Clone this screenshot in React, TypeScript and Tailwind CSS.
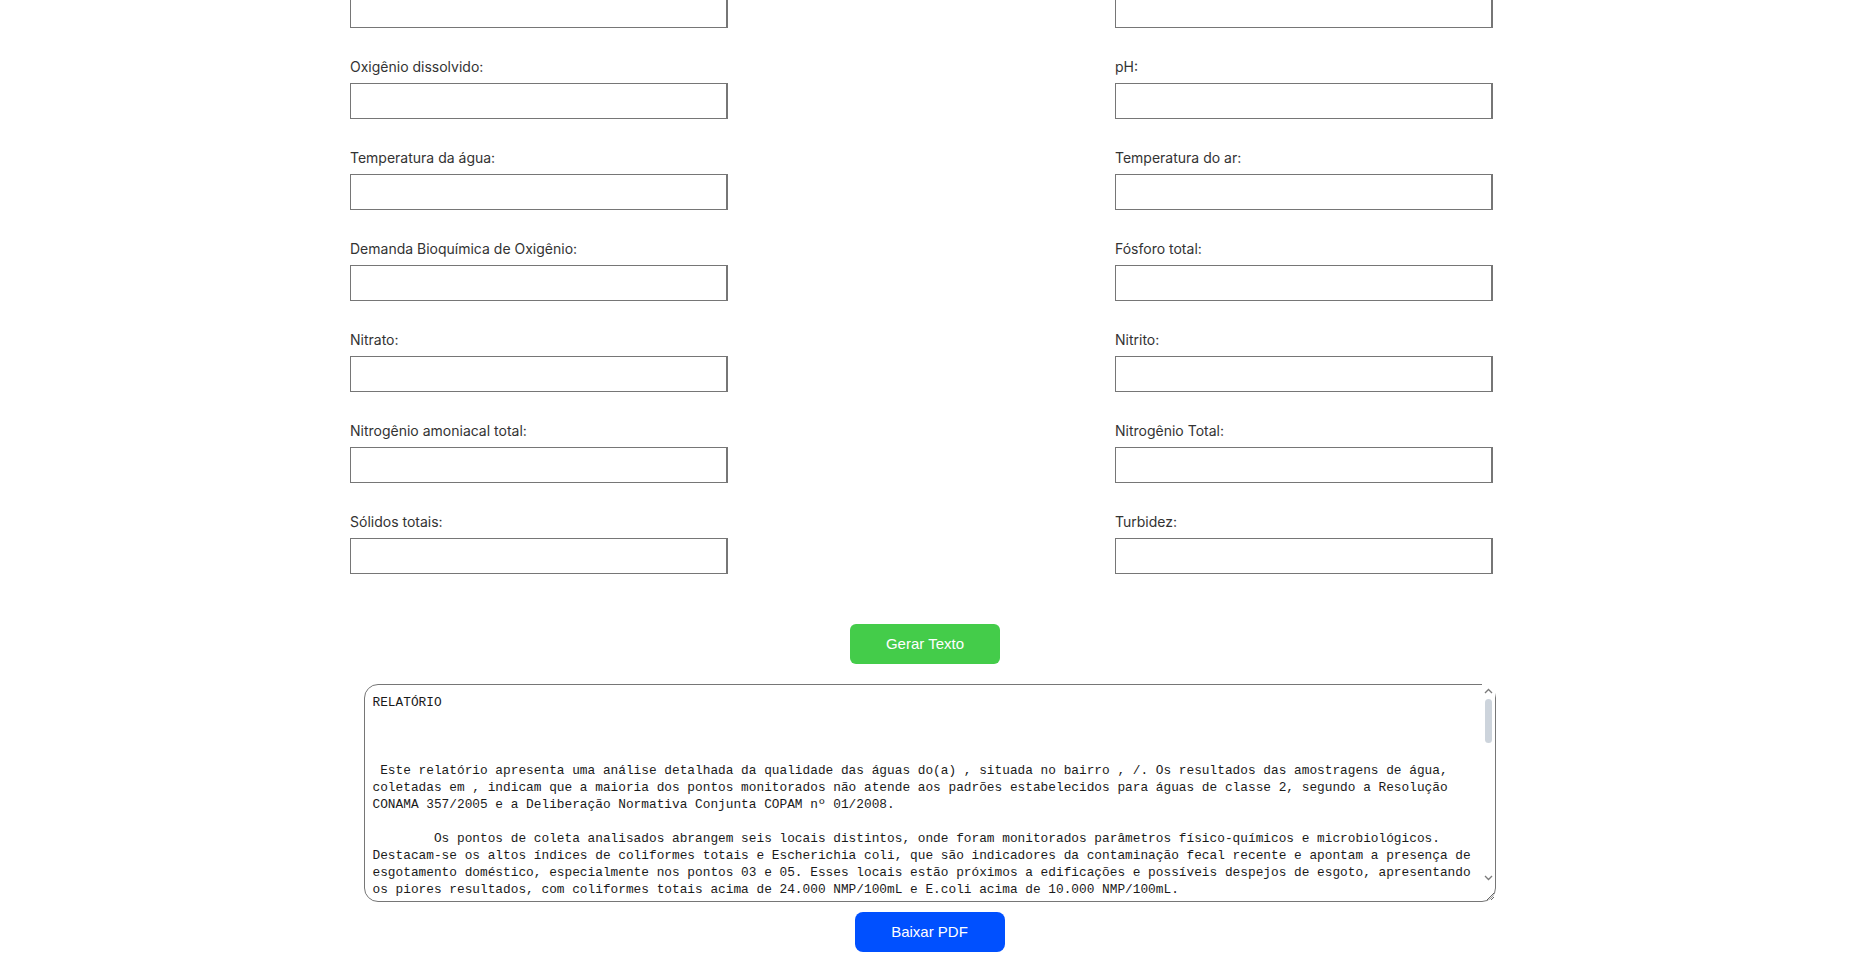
import React from "react";

const fields: [string, string][] = [
  ["Oxigênio dissolvido:", "pH:"],
  ["Temperatura da água:", "Temperatura do ar:"],
  ["Demanda Bioquímica de Oxigênio:", "Fósforo total:"],
  ["Nitrato:", "Nitrito:"],
  ["Nitrogênio amoniacal total:", "Nitrogênio Total:"],
  ["Sólidos totais:", "Turbidez:"],
];

const ind = "        ";

const relatorio = `RELATÓRIO



 Este relatório apresenta uma análise detalhada da qualidade das águas do(a) , situada no bairro , /. Os resultados das amostragens de água,
coletadas em , indicam que a maioria dos pontos monitorados não atende aos padrões estabelecidos para águas de classe 2, segundo a Resolução
CONAMA 357/2005 e a Deliberação Normativa Conjunta COPAM nº 01/2008.

${ind}Os pontos de coleta analisados abrangem seis locais distintos, onde foram monitorados parâmetros físico-químicos e microbiológicos.
Destacam-se os altos índices de coliformes totais e Escherichia coli, que são indicadores da contaminação fecal recente e apontam a presença de
esgotamento doméstico, especialmente nos pontos 03 e 05. Esses locais estão próximos a edificações e possíveis despejos de esgoto, apresentando
os piores resultados, com coliformes totais acima de 24.000 NMP/100mL e E.coli acima de 10.000 NMP/100mL.

${ind}Em relação aos parâmetros físico-químicos, foram observadas concentrações de oxigênio dissolvido abaixo do limite mínimo de 5 mg/L
em parte dos pontos, o que indica consumo elevado de oxigênio pela decomposição de matéria orgânica.

${ind}Os valores de pH permaneceram dentro da faixa de 6,0 a 9,0 estabelecida pela legislação. A temperatura da água e do ar apresentou
variação compatível com o período de amostragem.

${ind}A Demanda Bioquímica de Oxigênio (DBO) e o fósforo total apresentaram valores acima dos limites em alguns pontos, reforçando a
hipótese de lançamento de efluentes domésticos sem tratamento adequado.

${ind}As concentrações de nitrato, nitrito e nitrogênio amoniacal total mantiveram-se, em geral, abaixo dos limites estabelecidos.

${ind}Os sólidos totais e a turbidez apresentaram variações associadas ao escoamento superficial e ao carreamento de sedimentos.



CONCLUSÃO


${ind}Diante dos resultados obtidos, recomenda-se a identificação e a eliminação das fontes de lançamento de esgoto, bem como a
continuidade do monitoramento da qualidade das águas, a fim de acompanhar a evolução dos parâmetros analisados.
`;

function Field({ label }: { label: string }) {
  return (
    <div className="flex flex-col w-[378px]">
      <label className="pt-[1px] text-sm leading-5 text-[#333333] mb-[6px]">{label}</label>
      <input
        type="text"
        className="h-9 w-[378px] border border-r-2 border-[#767676] bg-white px-2 text-sm outline-none"
      />
    </div>
  );
}

function Chevron({ up }: { up?: boolean }) {
  return (
    <svg width="9" height="6" viewBox="0 0 9 6" className="block">
      <path
        d={up ? "M1 5 L4.5 1.5 L8 5" : "M1 1 L4.5 4.5 L8 1"}
        fill="none"
        stroke="#7a7a7a"
        strokeWidth="1.3"
      />
    </svg>
  );
}

export default function App() {
  return (
    <div className="bg-white min-h-screen flex flex-col items-center font-['Inter','Noto_Sans',sans-serif]">
      <div className="w-[1143px] mr-[16px] flex flex-col gap-y-[28px]">
        <div className="flex justify-between -mt-[8px]">
          <input className="h-9 w-[378px] border border-r-2 border-[#767676] bg-white" />
          <input className="h-9 w-[378px] border border-r-2 border-[#767676] bg-white" />
        </div>
        {fields.map(([a, b]) => (
          <div key={a} className="flex justify-between">
            <Field label={a} />
            <Field label={b} />
          </div>
        ))}
      </div>

      <button className="mt-[50px] mr-[9px] h-10 w-[150px] rounded-md bg-[#44cc4a] text-white text-[15px] font-['Liberation_Sans',Arial,sans-serif]">
        Gerar Texto
      </button>

      <div className="relative mt-5 w-[1132px] h-[218px]">
        <textarea
          wrap="off"
          defaultValue={relatorio + "\n".repeat(30)}
          className="block h-[218px] w-[1132px] rounded-[14px] border border-[#767676] bg-white pl-2 pr-4 pt-[9px] text-[12.8px] leading-[17px] text-[#1a1a1a] overflow-hidden outline-none font-['Liberation_Mono','DejaVu_Sans_Mono',monospace]"
        />
        {/* scrollbar drawn over the textarea */}
        <div className="absolute top-0 right-[1px] w-[13px] h-[200px] bg-white flex flex-col items-center pt-[4px]">
          <Chevron up />
          <div className="mt-[5px] w-[7px] h-[44px] rounded-full bg-[#cdd4dc]" />
          <div className="flex-1" />
          <div className="mb-[3px]">
            <Chevron />
          </div>
        </div>
      </div>

      <button className="mt-[10px] h-10 w-[150px] rounded-lg bg-[#0050ff] text-white text-[15px] font-['Liberation_Sans',Arial,sans-serif]">
        Baixar PDF
      </button>
      <div className="h-4" />
    </div>
  );
}
